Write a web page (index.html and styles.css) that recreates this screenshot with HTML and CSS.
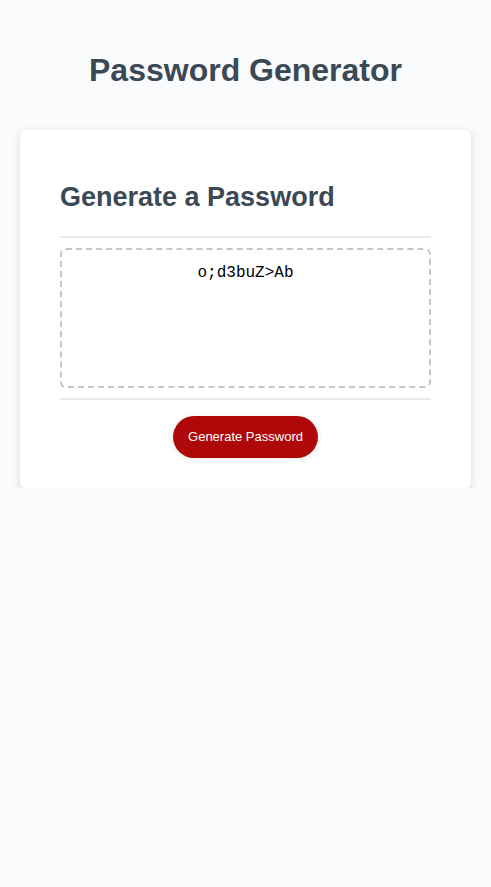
FILE: index.html
```html
<!DOCTYPE html>
<html lang="en">
<head>
<meta charset="UTF-8">
<title>Password Generator</title>
<link rel="stylesheet" href="styles.css">
</head>
<body>
<div class="wrapper">
  <header>
    <h1>Password Generator</h1>
  </header>
  <div class="card">
    <div class="card-header">
      <h2>Generate a Password</h2>
    </div>
    <div class="card-body">
      <textarea readonly id="password" class="password" aria-label="Generated Password">o;d3buZ&gt;Ab</textarea>
    </div>
    <div class="card-footer">
      <button class="btn">Generate Password</button>
    </div>
  </div>
</div>
</body>
</html>
```

FILE: styles.css
```css
* { box-sizing: border-box; }
html, body { margin: 0; padding: 0; }
body {
  font-family: "Liberation Sans", Arial, sans-serif;
  background-color: #f9fbfd;
}
.wrapper { padding: 30px 20px 0 20px; }
header {
  text-align: center;
  padding: 0 20px 20px 20px;
  color: hsl(206, 17%, 28%);
}
header h1 { font-size: 32px; margin: 22px 0 21px 0; }
.card {
  background-color: #fff;
  border-radius: 5px;
  box-shadow: rgba(0, 0, 0, 0.15) 0px 2px 8px 0px;
  color: hsl(206, 17%, 28%);
  font-size: 18px;
  margin: 0 auto;
  max-width: 800px;
  padding: 30px 40px;
}
.card-header h2 { font-size: 27px; margin: 22.4px 0; }
.card-header::after {
  content: " ";
  display: block;
  width: 100%;
  background: #e7e9eb;
  height: 2px;
}
.card-body { min-height: 100px; }
.password {
  appearance: none;
  display: block;
  width: 100%;
  padding: 14px 15px 85px 15px;
  font-family: "Liberation Mono", "Courier New", monospace;
  font-size: 16px;
  text-align: center;
  margin: 10px 0;
  border: 2px dashed #c0c7cf;
  border-radius: 6px;
  resize: none;
  overflow: hidden;
  color: #000;
  background: #fff;
  height: 140px;
}
.card-footer { text-align: center; }
.card-footer::before {
  content: " ";
  display: block;
  width: 100%;
  background: #e7e9eb;
  height: 2px;
}
.btn {
  border: none;
  background-color: hsl(360, 91%, 36%);
  border-radius: 25px;
  box-shadow: rgba(0, 0, 0, 0.1) 0px 1px 6px 0px;
  color: #fff;
  display: inline-block;
  font-family: "Liberation Sans", Arial, sans-serif;
  font-size: 13px;
  line-height: 22px;
  margin: 16px 0 0 0;
  padding: 10px 15px;
  text-align: center;
  cursor: pointer;
}
```
